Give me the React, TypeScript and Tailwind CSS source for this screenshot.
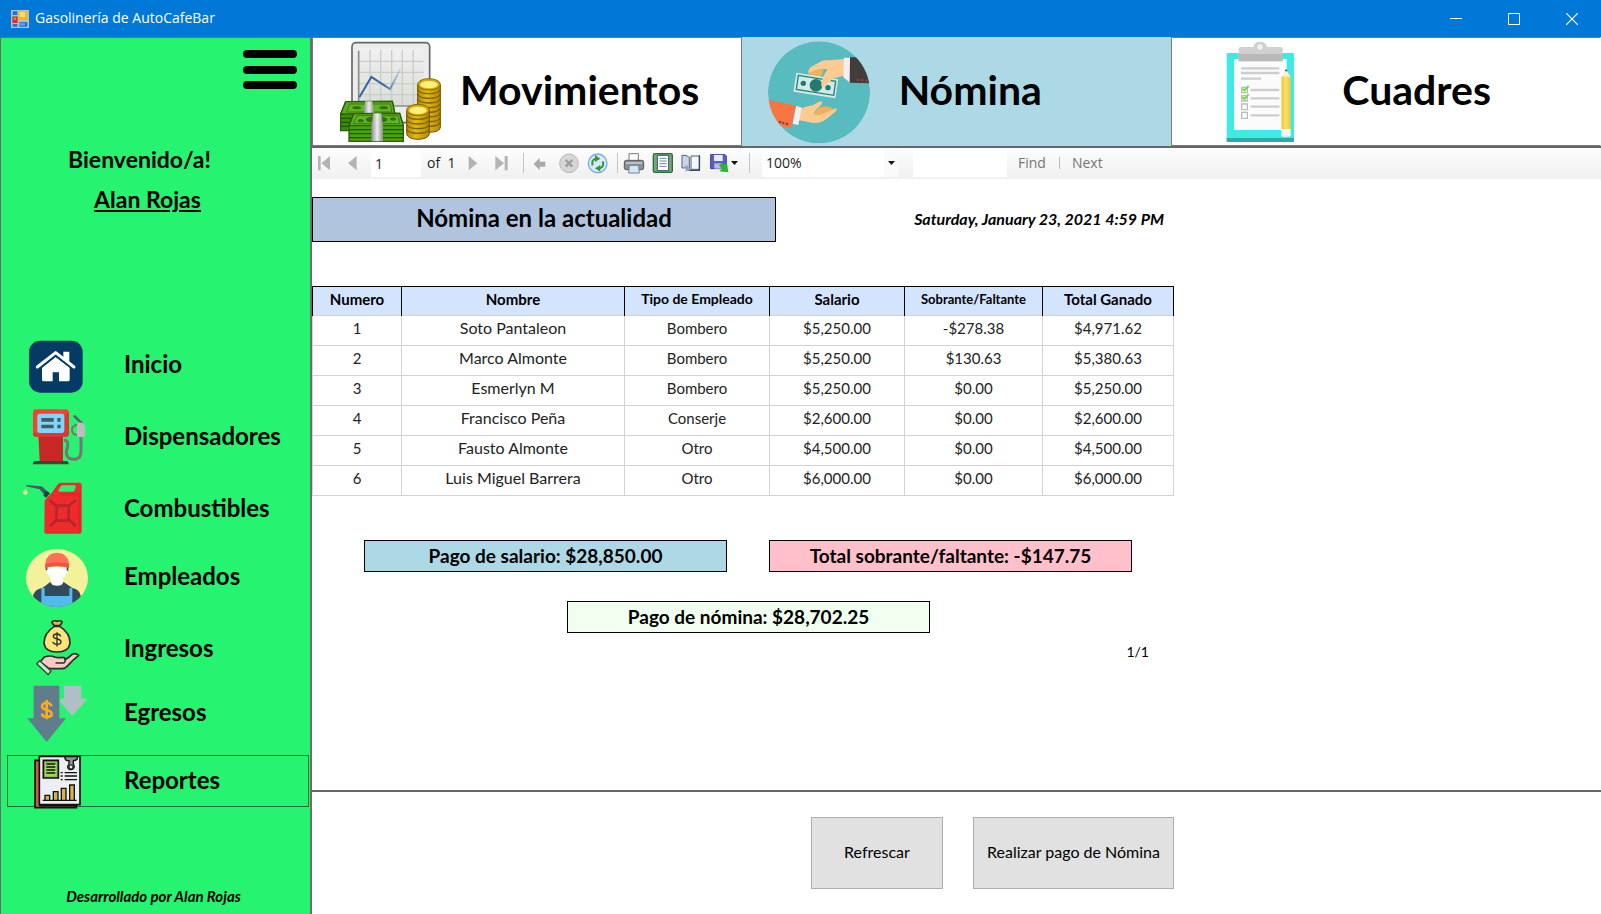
import type { ReactNode } from 'react';

const HouseIcon = () => (
  <svg viewBox="60 45 216 180" className="h-[60px] w-[72px] shrink-0" aria-hidden="true">
    <rect x="87" y="62" width="161" height="156" rx="34" fill="#043a63" />
    <path d="M112 141 167 98l55 43" fill="none" stroke="#fff" strokeWidth="9" strokeLinecap="round" strokeLinejoin="round" />
    <path d="M190 95h18v32l-18-14z" fill="#fff" />
    <path d="M126 143 167 111l42 32v36q0 5-5 5h-27v-27h-19v27h-27q-5 0-5-5z" fill="#fff" />
    <path d="m124 143 43-34 44 34" fill="none" stroke="#043a63" strokeWidth="3" />
  </svg>
);

const PumpIcon = () => (
  <svg viewBox="60 261 216 180" className="h-[60px] w-[72px] shrink-0" aria-hidden="true">
    <path d="M192 361q14 0 11 18l-4 18q0 21 24 21 20 0 20-24v-44" fill="none" stroke="#757575" strokeWidth="9" />
    <path d="m224 289 22 22" stroke="#616161" strokeWidth="8" strokeLinecap="round" />
    <path d="M232 314q-16 2-16 16t16 15" fill="none" stroke="#757575" strokeWidth="6" />
    <path d="m236 307 14 3 5 8v27q0 6-6 6h-14q-4 0-4-6v-29z" fill="#bdbdbd" />
    <path d="M115 345h74v79h-70z" fill="#c62828" />
    <path d="M108 268h88q11 0 11 11v61q0 10-10 10h-88q-10 0-10-10v-61q0-11 9-11z" fill="#f44336" />
    <path d="M99 338v3q0 10 10 10h88q10 0 10-10v-65l-15 12v50z" fill="#d32f2f" opacity=".6" />
    <rect x="112" y="281" width="81" height="58" rx="8" fill="#81d4fa" />
    <path d="M124 294h37v11h-37zM172 294h10v11h-10zM124 314h37v11h-37zM172 314h10v11h-10z" fill="#455a64" />
    <path d="M99 433q0-10 8-10h91q8 0 8 10z" fill="#424242" />
  </svg>
);

const CanIcon = () => (
  <svg viewBox="60 477 216 180" className="h-[60px] w-[72px] shrink-0" aria-hidden="true">
    <path d="m79 495 43 4q6 1 9 5l18 16-11 11-19-23-41-9z" fill="#455a64" />
    <path d="m138 513 12 7-11 13-9-6z" fill="#263a4a" />
    <path d="M76 506q7 8 7 13 0 5-7 5t-7-5q0-5 7-13z" fill="#e6ee9c" />
    <path fillRule="evenodd" d="m134 541 21-22 14-20q6-11 15-11h55q6 0 6 7v140q0 6-6 6H138q-5 0-5-6zM188 496q-4 0-7 5l-5 9q-2 5 3 5h40q4 0 5-4l3-9q1-6-4-6z" fill="#ed2b2b" />
    <path d="M180 519h62v116h-8V527h-54z" fill="#d92027" opacity=".5" />
    <path d="m148 540 22 18v40l-21 21M228 540l-22 18v40l22 21M170 558h36v44h-36z" fill="none" stroke="#b9252b" strokeWidth="8" />
    <path d="m151 543 16 12h41l16-12M151 617l19-15h37l17 15" fill="none" stroke="#b9252b" strokeWidth="4" />
  </svg>
);

const WorkerIcon = () => (
  <svg viewBox="60 21 216 180" className="h-[60px] w-[72px] shrink-0" aria-hidden="true">
    <defs>
      <clipPath id="worker-clip"><ellipse cx="171" cy="114" rx="93" ry="87" /></clipPath>
    </defs>
    <g clipPath="url(#worker-clip)">
      <rect x="76" y="25" width="190" height="180" fill="#f3f29b" />
      <path d="M98 170q4-22 30-27l22-16h42l24 16q24 5 27 27v31H98z" fill="#324a5e" />
      <path d="M153 118h36v10q-2 9-18 9t-18-9z" fill="#fff" />
      <path d="M124 144h10v24h74v-24h9v60h-93z" fill="#54b9ec" />
    </g>
    <path d="M139 80h64v14q-1 7-6 8-8 22-26 22t-26-22q-5-1-6-8z" fill="#fff" />
    <path d="M137 78v13h5V80zM200 80v12h5V78z" fill="#39505f" />
    <path d="M136 84V70q3-32 35-32t36 32v14q-14-6-36-6t-35 6z" fill="#ff7058" />
    <path d="M136 84V71q35-7 71 0v13q-14-5-36-5t-35 5z" fill="#f1543f" />
  </svg>
);

const IncomeIcon = () => (
  <svg viewBox="60 237 216 180" className="h-[60px] w-[72px] shrink-0" aria-hidden="true">
    <g stroke="#2b2b2b" strokeWidth="5" strokeLinejoin="round" strokeLinecap="round">
      <path d="M163 257q-8-8-7-12 8-5 15-1 8-4 15 1 0 5-7 12z" fill="#d9bf5b" />
      <path d="M163 259h16q32 20 31 50-3 27-39 27t-39-27q0-30 31-50z" fill="#fbe57a" />
      <path d="M182 288q-3-6-11-6-11 0-11 7 0 6 11 8 12 2 12 9 0 7-12 7-9 0-12-6M171 278v40" fill="none" strokeWidth="4" />
      <path d="m120 366 13-15q17-6 31 0 9 3 23 1 9 0 8 7 15-9 21-16 10-6 20 3-18 14-30 28-9 11-19 12h-35q-7 0-11-5z" fill="#fbc9c5" />
      <path d="M168 369h23q6-2 4-9" fill="none" strokeWidth="4" />
      <path d="m110 371 9-9 34 31-8 11z" fill="#c5f0cf" stroke="#2b4b2b" strokeWidth="4" />
    </g>
  </svg>
);

const ExpenseIcon = () => (
  <svg viewBox="60 429 216 180" className="h-[60px] w-[72px] shrink-0" aria-hidden="true">
    <path d="M192 437h52v39h19l-46 52-37-42v-10h12z" fill="#b0bec5" />
    <path d="M101 437h77v98h20l-58 71-58-71h19z" fill="#607d8b" />
    <path d="M154 499q-1-10-14-10-14 0-14 10 0 8 14 11 15 3 15 12 0 9-15 9-13 0-14-11M140 480v58" fill="none" stroke="#ffa726" strokeWidth="8" />
  </svg>
);

const ReportIcon = () => (
  <svg viewBox="60 633 216 180" className="h-[60px] w-[72px] shrink-0" aria-hidden="true">
    <g stroke="#111" strokeWidth="5">
      <path d="M105 661h15v136h109v6H105z" fill="#c95d4d" />
      <path d="M118 649h122v145H118z" fill="#eceef1" />
      <path d="M130 661h45v53h-45z" fill="#86c04e" />
      <path d="M136 669h33v38h-33z" fill="#a7d66b" stroke="none" />
      <path d="M139 672h27M139 681h27M139 690h27M139 699h27M194 698h37M194 708h37M194 719h37M182 698h6M182 708h6M182 719h6M128 781h102" fill="none" strokeWidth="4" />
      <path d="M194 650h38v7q-5 5-12 5v11q4 4 2 10-3 6-9 6-8 0-10-7 0-6 4-9v-11h-6q-6-2-7-12z" fill="#8d93a3" strokeWidth="4" />
      <circle cx="213" cy="681" r="6" fill="#eceef1" strokeWidth="3" />
      <path d="M135 766h14v15h-14zM160 755h14v26h-14zM184 745h14v36h-14zM209 735h14v46h-14z" fill="#d9b34a" strokeWidth="4" />
    </g>
  </svg>
);

const MovementsArt = () => (
  <svg viewBox="84 30 312 312" className="size-[104px] shrink-0" aria-hidden="true">
    <defs>
      <linearGradient id="paper" x1="0" y1="0" x2="0" y2="1">
        <stop offset="0" stopColor="#f1f1f1" /><stop offset="1" stopColor="#d9dcd6" />
      </linearGradient>
      <linearGradient id="coin" x1="0" y1="0" x2="1" y2="0">
        <stop offset="0" stopColor="#b28a00" /><stop offset=".4" stopColor="#e0bb14" /><stop offset="1" stopColor="#b48700" />
      </linearGradient>
      <linearGradient id="band" x1="0" y1="0" x2="1" y2="0">
        <stop offset="0" stopColor="#8d8f8a" /><stop offset=".5" stopColor="#eceeea" /><stop offset="1" stopColor="#8d8f8a" />
      </linearGradient>
      <linearGradient id="trend" x1="0" y1="0" x2="1" y2="0">
        <stop offset=".6" stopColor="#3465a4" /><stop offset="1" stopColor="#3465a4" stopOpacity=".1" />
      </linearGradient>
    </defs>
    <rect x="126" y="38" width="233" height="240" rx="12" fill="#ececec" stroke="#666" strokeWidth="5" />
    <path d="M145 55h196v172H145z" fill="url(#paper)" />
    <path d="M180 60v166M212 60v166M245 60v166M277 60v166M310 60v166M146 94h195M146 127h195M146 161h195M146 194h195" stroke="#c9ccc7" strokeWidth="4" fill="none" />
    <path d="M146 62v166h210" stroke="#8b8d88" strokeWidth="5" fill="none" />
    <path d="m148 202 36-61 56 36 32-60" stroke="url(#trend)" strokeWidth="6" fill="none" />
    <path d="M323 164v128q0 14 34 15 34-1 34-15V164z" fill="url(#coin)" stroke="#6e5300" strokeWidth="3" />
    <path d="M323 178q4 13 34 13t34-13M323 192q4 13 34 13t34-13M323 206q4 13 34 13t34-13M323 220q4 13 34 13t34-13M323 234q4 13 34 13t34-13M323 248q4 13 34 13t34-13M323 262q4 13 34 13t34-13M323 276q4 13 34 13t34-13" fill="none" stroke="#7d5f00" strokeWidth="4" />
    <ellipse cx="357" cy="163" rx="34" ry="17" fill="#d4ab0c" stroke="#8a6900" strokeWidth="3" />
    <ellipse cx="357" cy="164" rx="26" ry="11" fill="#fdf07a" />
    <path d="M290 241v70q2 16 34 17 32-1 34-17v-70z" fill="url(#coin)" stroke="#6e5300" strokeWidth="3" />
    <path d="M290 255q4 13 34 13t34-13M290 269q4 13 34 13t34-13M290 283q4 13 34 13t34-13M290 297q4 13 34 13t34-13" fill="none" stroke="#7d5f00" strokeWidth="4" />
    <ellipse cx="324" cy="240" rx="34" ry="17" fill="#d4ab0c" stroke="#8a6900" strokeWidth="3" />
    <ellipse cx="324" cy="241" rx="26" ry="11" fill="#fdf07a" />
    <path d="m107 215 140-1 8 40v48H92v-49z" fill="#3b8d06" stroke="#2c5d0a" strokeWidth="4" />
    <path d="m107 215 140-1 8 38H92z" fill="#5aad20" stroke="#2c5d0a" strokeWidth="4" />
    <path d="m119 222 122 0 4 24H110z" fill="#63b425" stroke="#3a7d0e" strokeWidth="3" />
    <ellipse cx="140" cy="233" rx="13" ry="5" fill="#356f10" /><ellipse cx="221" cy="233" rx="13" ry="5" fill="#356f10" />
    <path d="M165 214h22l6 38h-32z" fill="url(#band)" />
    <path d="M93 265h30M93 277h30M93 289h30" stroke="#235207" strokeWidth="4" />
    <path d="m131 251 138-1 11 38v46H117v-46z" fill="#4aa30c" stroke="#2c5d0a" strokeWidth="4" />
    <path d="m131 251 138-1 11 37H117z" fill="#5aad20" stroke="#2c5d0a" strokeWidth="4" />
    <path d="m141 257 122 0 7 24H130z" fill="#63b425" stroke="#3a7d0e" strokeWidth="3" />
    <ellipse cx="200" cy="269" rx="33" ry="10" fill="#356f10" />
    <ellipse cx="152" cy="272" rx="9" ry="5" fill="#356f10" /><ellipse cx="249" cy="267" rx="9" ry="5" fill="#356f10" />
    <path d="M118 299h161M118 311h161M118 323h161" stroke="#235207" strokeWidth="4" />
    <path d="M190 250h24l5 38v46h-35v-46z" fill="url(#band)" />
  </svg>
);

const PayrollArt = () => (
  <svg viewBox="82 27 312 312" className="size-[104px] shrink-0" aria-hidden="true">
    <defs>
      <clipPath id="pay-clip"><circle cx="238" cy="184" r="153" /></clipPath>
    </defs>
    <g clipPath="url(#pay-clip)">
      <circle cx="238" cy="184" r="153" fill="#58bbc0" />
      <path d="M205 129q3-16 20-20l30-4-8 27q-12 12-22 5z" fill="#f2b05e" />
      <path d="m170 125 126 20-9 57-126-20z" fill="#cfeae8" />
      <path d="m176 133 112 18-6 42-112-18z" fill="none" stroke="#2c8174" strokeWidth="4" />
      <ellipse cx="229" cy="163" rx="19" ry="19" fill="#217a6b" />
      <circle cx="191" cy="157" r="8" fill="#217a6b" /><circle cx="265" cy="170" r="8" fill="#217a6b" />
      <path d="M206 124q-1-12 12-18l24-14q10-5 24-4l48-4v49q-19 7-33 9l-26 23q-9 6-11-3l6-24q6-14 14-22-22-6-38 2-15 8-20 6z" fill="#fccb8f" />
      <path d="M313 80h18v75l-20-16z" fill="#f4eef0" />
      <path d="M331 79h62v78l-63-2z" fill="#413d3b" />
      <circle cx="355" cy="147" r="4" fill="#8e3c3c" /><circle cx="368" cy="148" r="4" fill="#8e3c3c" /><circle cx="380" cy="149" r="4" fill="#8e3c3c" />
      <path d="M223 252q5-18 24-25 15-4 33 6l11 3q1 5-7 8l-30 17z" fill="#f2b05e" />
      <path d="m180 233 17-5q11-3 22-5l22-12q6-1 7 4l-9 13q-12 8-17 20 12 9 25 2l43-18q4 2-3 9-24 25-45 33-18 4-35-1l-29-5z" fill="#fccb8f" />
      <path d="m169 224 17 6-10 52-17-4z" fill="#f4eef0" />
      <path d="m80 205 89 19-15 68-74-18z" fill="#f77542" />
      <circle cx="121" cy="273" r="4" fill="#a33b34" /><circle cx="131" cy="276" r="4" fill="#a33b34" /><circle cx="142" cy="279" r="4" fill="#a33b34" />
    </g>
  </svg>
);

const ClipboardArt = () => (
  <svg viewBox="144 120 312 312" className="size-[104px] shrink-0" aria-hidden="true">
    <rect x="200" y="159" width="202" height="267" rx="4" fill="#3eebe4" />
    <path d="M200 414h202v8q0 4-4 4H204q-4 0-4-4z" fill="#2aaba8" />
    <path d="M222 177h158v213H222z" fill="#fbfbfb" />
    <path d="M236 184v-36q0-7 7-7h37q3-16 20-16t21 16h39q8 0 8 7v36z" fill="#d0d0d0" />
    <path d="M236 162h132v22H236z" fill="#b9b9b9" />
    <circle cx="300" cy="141" r="8" fill="#f4f4f4" />
    <path d="M243 205h115M243 219h115M243 236h60M272 270h86M272 295h86M272 320h86M272 346h86" stroke="#cdcdcd" strokeWidth="7" />
    <path d="M245 262h17v16h-17zM245 287h17v16h-17zM245 312h17v17h-17zM245 337h17v18h-17z" fill="#fff" stroke="#bdbdbd" strokeWidth="4" />
    <path d="m247 266 6 6 13-14M247 291l6 6 13-14" fill="none" stroke="#6ee23a" strokeWidth="6" />
    <path d="m364 231 14-23 14 23z" fill="#fbeed2" /><path d="m374 214 4-8 5 8z" fill="#555" />
    <path d="M364 230h28v157h-28z" fill="#f3cf4a" /><path d="M373 230h10v157h-10z" fill="#f8dc6c" />
    <path d="M364 387h28v19q0 4-4 4h-20q-4 0-4-4z" fill="#f6f6f6" />
  </svg>
);

const navItems: { label: string; icon: ReactNode; space: string; active?: boolean }[] = [
  { label: 'Inicio', icon: <HouseIcon />, space: '' },
  { label: 'Dispensadores', icon: <PumpIcon />, space: 'mt-5' },
  { label: 'Combustibles', icon: <CanIcon />, space: 'mt-5' },
  { label: 'Empleados', icon: <WorkerIcon />, space: 'mt-4' },
  { label: 'Ingresos', icon: <IncomeIcon />, space: 'mt-5' },
  { label: 'Egresos', icon: <ExpenseIcon />, space: 'mt-3' },
  { label: 'Reportes', icon: <ReportIcon />, space: 'mt-4', active: true },
];

const employees = [
  ['1', 'Soto Pantaleon', 'Bombero', '$5,250.00', '-$278.38', '$4,971.62'],
  ['2', 'Marco Almonte', 'Bombero', '$5,250.00', '$130.63', '$5,380.63'],
  ['3', 'Esmerlyn M', 'Bombero', '$5,250.00', '$0.00', '$5,250.00'],
  ['4', 'Francisco Peña', 'Conserje', '$2,600.00', '$0.00', '$2,600.00'],
  ['5', 'Fausto Almonte', 'Otro', '$4,500.00', '$0.00', '$4,500.00'],
  ['6', 'Luis Miguel Barrera', 'Otro', '$6,000.00', '$0.00', '$6,000.00'],
];

function TitleBar() {
  return (
    <header className="flex h-[37px] shrink-0 items-center bg-[#0078d7] text-white">
      <svg viewBox="33 24 54 54" className="ml-[11px] size-[18px]" aria-hidden="true">
        <path d="M33 24h54v54H33z" fill="#b9bec6" />
        <path d="M38 28h14v11H38zM38 66h14v8H38zM58 60h24v14H58z" fill="#2a6fc9" />
        <path d="M37 43h16v20H37z" fill="#c8352b" /><path d="M41 47h7v7h-7z" fill="#e8776b" />
        <path d="M56 27h27v27H56z" fill="#f2b713" /><path d="M59 30h17v15H59z" fill="#fbdc63" />
        <path d="M58 62h17v9H58z" fill="#5b9bf0" />
      </svg>
      <h1 className="ml-1.5 grow pb-0.5 text-[14px] leading-5">Gasolinería de AutoCafeBar</h1>
      <button type="button" aria-label="Minimizar" className="flex h-full w-[58px] items-center justify-center">
        <svg viewBox="0 0 12 12" className="size-3"><path d="M0 5.5h12" stroke="#fff" /></svg>
      </button>
      <button type="button" aria-label="Maximizar" className="flex h-full w-[58px] items-center justify-center">
        <svg viewBox="0 0 12 12" className="size-3"><path d="M.5.5h11v11H.5z" stroke="#fff" fill="none" /></svg>
      </button>
      <button type="button" aria-label="Cerrar" className="flex h-full w-[58px] items-center justify-center">
        <svg viewBox="0 0 12 12" className="size-3"><path d="m0 0 12 12M12 0 0 12" stroke="#fff" strokeWidth="1.200" /></svg>
      </button>
    </header>
  );
}

function Sidebar() {
  return (
    <aside className="flex w-[312px] shrink-0 flex-col border-t border-r-2 border-l border-[#6b6f6c] bg-[#26f370] pb-2 font-[Lato,sans-serif] font-bold text-black">
      <button type="button" aria-label="Menú" className="mt-[11px] mr-3 self-end">
        <svg viewBox="0 0 56 42" className="h-[42px] w-14">
          <path d="M5 5h46M5 21h46M5 36h46" stroke="#000" strokeWidth="8" strokeLinecap="round" />
        </svg>
      </button>
      <div className="mt-[54px] mr-8 flex flex-col items-center text-[23px] leading-7">
        <p>Bienvenido/a!</p>
        <p className="mt-3 ml-4 underline decoration-2 underline-offset-2">Alan Rojas</p>
      </div>
      <nav className="mt-[126px] flex flex-col pr-px pl-1.5">
        {navItems.map((item) => (
          <button
            key={item.label}
            type="button"
            className={`flex h-[52px] items-center gap-8 border pl-3 text-left text-[24px] leading-7 ${item.space} ${item.active ? 'border-[#12713a]' : 'border-transparent'}`}
          >
            {item.icon}
            <span className="pb-0.5">{item.label}</span>
          </button>
        ))}
      </nav>
      <p className="mt-auto pr-1 text-center text-[15px] leading-5 italic">Desarrollado por Alan Rojas</p>
    </aside>
  );
}

function ReportTabs() {
  const tab = 'flex h-[109px] items-center border text-[41px] leading-none';
  return (
    <nav className="grid grid-cols-3 border-b-2 border-[#666] font-[Lato,sans-serif] font-bold text-black">
      <button type="button" className={`${tab} gap-[18px] border-[#7a7a7a] bg-white pl-[25px]`}>
        <MovementsArt /><span className="pb-1">Movimientos</span>
      </button>
      <button type="button" className={`${tab} gap-7 border-[#add8e6] bg-[#add8e6] pl-6`}>
        <PayrollArt /><span className="pb-1">Nómina</span>
      </button>
      <button type="button" className={`${tab} gap-[30px] border-[#7a7a7a] border-r-white bg-white pl-9`}>
        <ClipboardArt /><span className="pb-1">Cuadres</span>
      </button>
    </nav>
  );
}

function ToolButton({ label, box, space, children }: { label: string; box: string; space: string; children: ReactNode }) {
  return (
    <button type="button" aria-label={label} className={`shrink-0 ${space}`}>
      <svg viewBox={box} className="size-[22px]">{children}</svg>
    </button>
  );
}

const Divider = ({ space }: { space: string }) => <span className={`h-5 w-px shrink-0 bg-[#c4c4c4] ${space}`} />;

function ViewerToolbar() {
  return (
    <div className="flex h-[31px] items-center bg-linear-to-b from-[#fdfdfd] to-[#f0f0f0] pb-px pl-0.5 text-[14px] leading-5 text-[#1e1e1e]">
      <ToolButton label="Primera página" box="12 366 66 66" space="">
        <path d="M24 378h8v43h-8zM60 378v43l-26-21z" fill="#b4b4b4" />
      </ToolButton>
      <ToolButton label="Página anterior" box="96 366 66 66" space="ml-1.5">
        <path d="M140 378v43l-26-21z" fill="#b4b4b4" />
      </ToolButton>
      <input aria-label="Página actual" defaultValue="1" className="ml-[7px] h-7 w-[50px] shrink-0 bg-white px-1 outline-none" />
      <span className="ml-1.5 w-[30px] shrink-0 whitespace-pre">of  1</span>
      <ToolButton label="Página siguiente" box="459 366 66 66" space="ml-1.5">
        <path d="M476 378v43l26-21z" fill="#b4b4b4" />
      </ToolButton>
      <ToolButton label="Última página" box="543 366 66 66" space="ml-1.5">
        <path d="M556 378v43l26-21zM584 378h9v43h-9z" fill="#b4b4b4" />
      </ToolButton>
      <Divider space="ml-2.5" />
      <ToolButton label="Volver" box="657 366 66 66" space="ml-[5px]">
        <path d="m671 402 18-18v11h17v15h-17v11z" fill="#a9a9a9" />
      </ToolButton>
      <ToolButton label="Detener" box="744 366 66 66" space="ml-[7px]">
        <circle cx="777" cy="400" r="28" fill="#d6d6d6" stroke="#b9b9b9" strokeWidth="3" />
        <path d="m767 390 20 20M787 390l-20 20" stroke="#9c9c9c" strokeWidth="7" />
      </ToolButton>
      <ToolButton label="Actualizar" box="831 366 66 66" space="ml-[7px]">
        <circle cx="863" cy="400" r="28" fill="#d9e9fb" stroke="#7ba9e2" strokeWidth="4" />
        <path d="M848 406q-5-15 9-20M878 394q6 16-9 21" fill="none" stroke="#2c9a35" strokeWidth="6" />
        <path d="m855 375 16 11-16 10zM871 405v20l-16-10z" fill="#2c9a35" />
      </ToolButton>
      <Divider space="ml-2" />
      <ToolButton label="Imprimir" box="939 366 66 66" space="ml-[5px]">
        <path d="M957 371h28v24h-28z" fill="#fff" stroke="#777" strokeWidth="3" />
        <rect x="943" y="391" width="58" height="28" rx="6" fill="#8b8f94" stroke="#55595d" strokeWidth="3" />
        <path d="M948 399h48" stroke="#c8ccd0" strokeWidth="5" />
        <path d="M958 406h28l2 23h-32z" fill="#cfe8f8" stroke="#6d8494" strokeWidth="3" />
      </ToolButton>
      <ToolButton label="Diseño de impresión" box="1026 366 66 66" space="ml-[7px]">
        <rect x="1030" y="371" width="57" height="56" rx="5" fill="#6fae72" stroke="#2f6a3a" strokeWidth="4" />
        <path d="M1042 376h34v46h-34z" fill="#fff" stroke="#3b4d70" strokeWidth="3" />
        <path d="M1048 385h22M1048 393h22M1048 401h22M1048 409h22" stroke="#7085ad" strokeWidth="3" />
      </ToolButton>
      <ToolButton label="Configurar página" box="1110 366 66 66" space="ml-1.5">
        <path d="M1116 376q14-2 22 6v36q-9-7-22-4z" fill="#c9d8ea" stroke="#536178" strokeWidth="3" />
        <path d="M1143 378h26v40h-26z" fill="#f3f6fb" stroke="#536178" strokeWidth="3" />
        <path d="M1168 376v45h-32" fill="none" stroke="#3d4657" strokeWidth="4" />
        <path d="m1127 402 14 14-14 10z" fill="#8aa5cb" />
      </ToolButton>
      <button type="button" aria-label="Exportar" className="ml-[7px] flex shrink-0 items-center">
        <svg viewBox="1197 366 66 66" className="size-[22px]">
          <path d="M1202 374h43l4 4v38h-47z" fill="#5a5fc4" stroke="#3b3f94" strokeWidth="3" />
          <path d="M1212 375h26v18h-26z" fill="#e9ecfb" />
          <path d="M1213 400h22v16h-22z" fill="#b9bde0" />
          <path d="m1227 406 9-7 8 7 7-7 4 28-27-3 7-7z" fill="#2db53a" />
        </svg>
        <svg viewBox="0 0 8 22" className="h-[22px] w-2"><path d="M0 9h7l-3.500 4z" fill="#111" /></svg>
      </button>
      <Divider space="ml-2.5" />
      <div className="relative ml-3 h-7 w-[137px] shrink-0">
        <select aria-label="Zoom" className="h-full w-full appearance-none bg-white pl-1 outline-none">
          <option>100%</option>
        </select>
        <span className="pointer-events-none absolute inset-y-0 right-0 flex w-[15px] items-center justify-center bg-[#fafafa]">
          <svg viewBox="0 0 8 5" className="h-[5px] w-2"><path d="M0 0h7L3.500 4z" fill="#111" /></svg>
        </span>
      </div>
      <input aria-label="Buscar texto" className="ml-3.5 h-7 w-[94px] shrink-0 bg-white px-1 outline-none" />
      <button type="button" className="ml-[11px] text-[#767676]">Find</button>
      <span className="ml-[13px] h-3 w-px bg-[#bdbdbd]" />
      <button type="button" className="ml-3 text-[#767676]">Next</button>
    </div>
  );
}

function PayrollTable() {
  const head = 'border-x border-t border-black pb-1 font-bold';
  return (
    <table className="mt-11 w-[861px] table-fixed border-collapse text-center text-[15px] leading-5 text-[#222]">
      <colgroup>
        <col className="w-[89px]" />
        <col className="w-[223px]" />
        <col className="w-[145px]" />
        <col className="w-[135px]" />
        <col className="w-[138px]" />
        <col className="w-[131px]" />
      </colgroup>
      <thead>
        <tr className="h-[29px] bg-[#d3e4ff] text-black">
          <th className={`${head} text-[15px]`}>Numero</th>
          <th className={`${head} text-[15px]`}>Nombre</th>
          <th className={`${head} text-[14px]`}>Tipo de Empleado</th>
          <th className={`${head} text-[15px]`}>Salario</th>
          <th className={`${head} text-[13px]`}>Sobrante/Faltante</th>
          <th className={`${head} text-[15px]`}>Total Ganado</th>
        </tr>
      </thead>
      <tbody>
        {employees.map((row) => (
          <tr key={row[0]} className="h-[30px]">
            {row.map((cell, i) => (
              <td key={i} className={`border border-[#d3d3d3] pb-1.5 ${i === 1 ? 'text-[16px]' : ''}`}>{cell}</td>
            ))}
          </tr>
        ))}
      </tbody>
    </table>
  );
}

function Report() {
  const total = 'flex h-8 w-[363px] items-center justify-center border border-black text-[19px] leading-6 font-bold';
  return (
    <section className="flex grow flex-col items-start bg-white pt-[18px] font-[Lato,sans-serif] text-black">
      <div className="flex w-[862px] items-center justify-between">
        <h2 className="flex h-[45px] w-[464px] items-center justify-center border border-black bg-[#b0c4de] pb-1 text-[24px] leading-7 font-bold">
          Nómina en la actualidad
        </h2>
        <p className="pr-2.5 pb-0.5 text-[16px] leading-5 font-bold italic">Saturday, January 23, 2021 4:59 PM</p>
      </div>
      <PayrollTable />
      <div className="mt-11 ml-[52px] flex gap-[42px]">
        <p className={`${total} bg-[#add8e6]`}>Pago de salario: $28,850.00</p>
        <p className={`${total} bg-[#ffc0cb]`}>Total sobrante/faltante: -$147.75</p>
      </div>
      <p className={`${total} mt-[29px] ml-[255px] bg-[#f0fff0]`}>Pago de nómina: $28,702.25</p>
      <p className="mt-[9px] w-[837px] text-right text-[14px] leading-5">1/1</p>
    </section>
  );
}

export default function App() {
  const action = 'h-[72px] border border-[#adadad] bg-[#e1e1e1] pb-0.5 text-[16px] leading-6 text-black';
  return (
    <div className="flex min-h-screen flex-col bg-white font-['Open_Sans',sans-serif]">
      <TitleBar />
      <div className="flex grow">
        <Sidebar />
        <main className="flex min-w-0 grow flex-col">
          <ReportTabs />
          <ViewerToolbar />
          <Report />
          <footer className="flex h-[124px] shrink-0 items-start gap-[30px] border-t-2 border-[#666] pt-[25px] pl-[499px] font-[Lato,sans-serif]">
            <button type="button" className={`${action} w-[132px]`}>Refrescar</button>
            <button type="button" className={`${action} w-[201px]`}>Realizar pago de Nómina</button>
          </footer>
        </main>
      </div>
    </div>
  );
}
